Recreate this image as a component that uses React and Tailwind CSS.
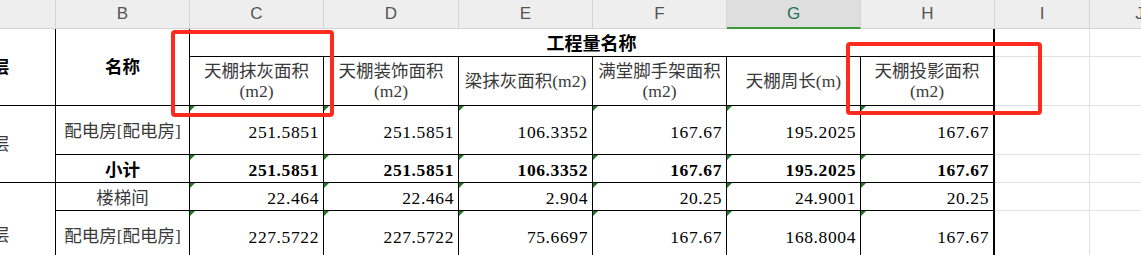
import React from 'react';
import clsx from 'clsx';

// column A is scrolled mostly off screen, so its letter is not shown
const letters = ['', 'B', 'C', 'D', 'E', 'F', 'G', 'H', 'I', 'J'];

const rows = [
  { name: '配电房[配电房]', values: ['251.5851', '251.5851', '106.3352', '167.67', '195.2025', '167.67'] },
  { name: '小计', bold: true, values: ['251.5851', '251.5851', '106.3352', '167.67', '195.2025', '167.67'] },
  { name: '楼梯间', values: ['22.464', '22.464', '2.904', '20.25', '24.9001', '20.25'] },
  { name: '配电房[配电房]', values: ['227.5722', '227.5722', '75.6697', '167.67', '168.8004', '167.67'] },
];

const heads = [
  ['天棚抹灰面积', '(m2)'],
  ['天棚装饰面积', '(m2)'],
  ['梁抹灰面积(m2)'],
  ['满堂脚手架面积', '(m2)'],
  ['天棚周长(m)'],
  ['天棚投影面积', '(m2)'],
];

// cell with black grid line on right/bottom
const Cell = ({ className, thick, mark, children }) => (
  <div
    className={clsx(
      'relative flex items-center border-b border-black',
      thick ? 'border-r-2' : 'border-r',
      className
    )}
  >
    {mark && (
      <span className="absolute left-0 top-0 h-0 w-0 border-t-[5px] border-r-[5px] border-t-[#1b7a1b] border-r-transparent" />
    )}
    {children}
  </div>
);

// empty sheet cell outside the table
const Blank = () => <div className="border-r border-b border-[#e1e1e1]" />;

export default function App() {
  return (
    <div className="relative h-[255px] w-[1141px] overflow-hidden bg-white font-['Liberation_Serif','Noto_Sans_CJK_SC',serif] text-[17.5px] text-[#3a3a3a]">
      <div className="-ml-[71px] grid w-[1261px] grid-cols-[127px_134px_134px_135px_134px_134px_134px_134px_95px_100px] grid-rows-[29px_28px_49px_49px_28px_28px_49px_28px]">
        {/* column letters */}
        {letters.map((l, i) => (
          <div
            key={i}
            className={clsx(
              "flex items-center justify-center border-r border-[#d4d4d4] font-['Liberation_Sans',sans-serif] text-[17px]",
              l === 'G'
                ? 'border-b-2 border-b-[#3d9a36] bg-[#dedede] text-[#17705a]'
                : 'border-b bg-[#eeeeee] text-[#555555]'
            )}
          >
            {l}
          </div>
        ))}

        {/* title rows */}
        <Cell className="row-span-2 justify-center font-bold text-black">楼层</Cell>
        <Cell className="row-span-2 justify-center font-bold text-black">名称</Cell>
        <Cell thick className="col-span-6 justify-center pt-1 text-[18px] font-bold text-black">
          工程量名称
        </Cell>
        <Blank />
        <Blank />

        {heads.map((h, i) => (
          <Cell key={i} thick={i === 5} className="flex-col justify-center text-center leading-[20.5px]">
            {h.map((t) => (
              <span key={t}>{t}</span>
            ))}
          </Cell>
        ))}
        <Blank />
        <Blank />

        {rows.map((r, ri) => (
          <React.Fragment key={ri}>
            {ri === 0 && <Cell className="row-span-2 justify-center">一层</Cell>}
            {ri === 2 && <Cell className="row-span-3 justify-center">二层</Cell>}
            <Cell className={clsx('justify-center pt-[3px]', r.bold && 'font-bold text-black')}>{r.name}</Cell>
            {r.values.map((v, vi) => (
              <Cell
                key={vi}
                mark
                thick={vi === 5}
                className={clsx('justify-end pr-[4px] pt-[4px] tracking-[0.6px] text-black', r.bold && 'font-bold')}
              >
                {v}
              </Cell>
            ))}
            <Blank />
            <Blank />
          </React.Fragment>
        ))}

        {/* next row, cut off at the bottom */}
        <Cell />
        {[0, 1, 2, 3, 4, 5].map((i) => (
          <Cell key={i} mark thick={i === 5} />
        ))}
        <Blank />
        <Blank />
      </div>

      {/* red annotation boxes */}
      <div className="absolute left-[171px] top-[30px] h-[87px] w-[163px] rounded-[4px] border-4 border-[#ff2b1f]" />
      <div className="absolute left-[846px] top-[42px] h-[73px] w-[196px] rounded-[4px] border-4 border-[#ff2b1f]" />
    </div>
  );
}
